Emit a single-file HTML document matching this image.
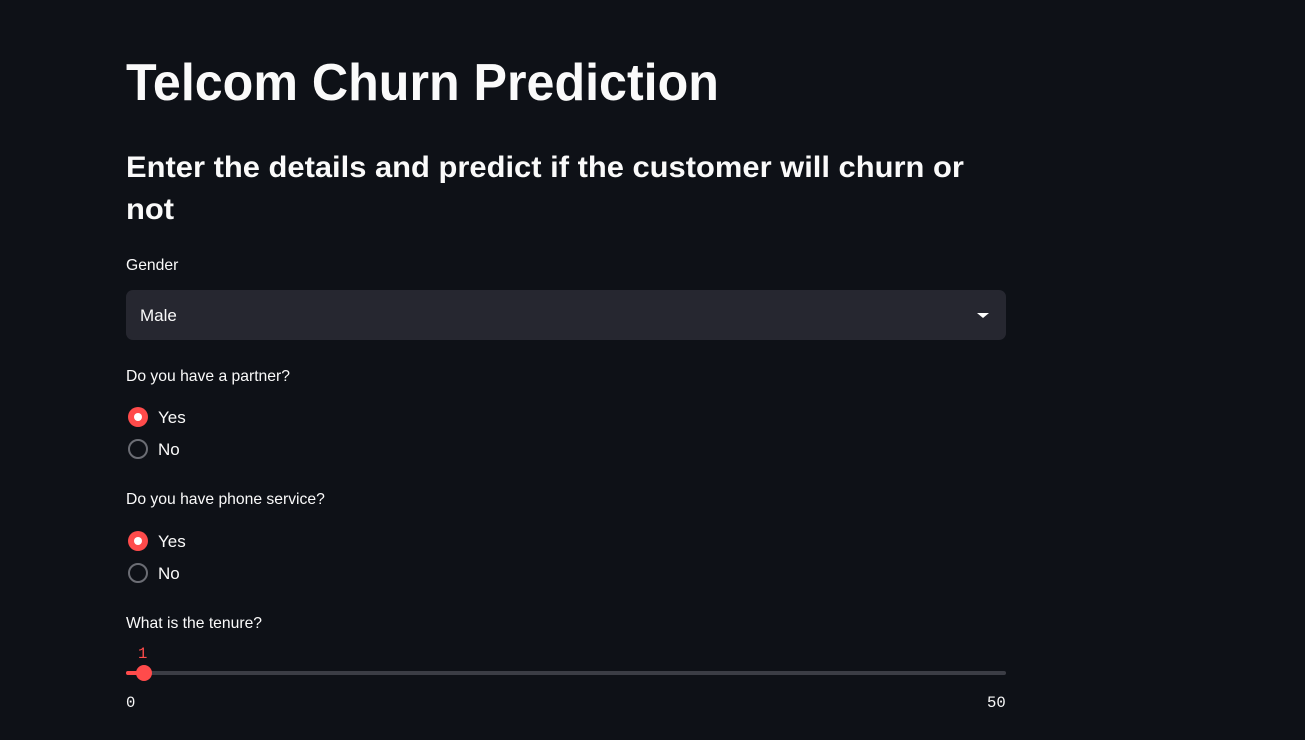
<!DOCTYPE html>
<html><head><meta charset="utf-8"><style>
html,body{margin:0;padding:0;background:#0e1117;width:1305px;height:740px;overflow:hidden;font-family:"Liberation Sans",sans-serif;color:#fafafa}
.a{position:absolute;white-space:nowrap}
h1{position:absolute;left:126px;top:52px;margin:0;font-size:52px;line-height:62px;font-weight:700;transform:scaleX(0.965);transform-origin:left top;white-space:nowrap}
.h2{left:126px;font-size:30px;font-weight:700;line-height:42px;transform:scaleX(1.03);transform-origin:left top}
.lbl{left:126px;font-size:15.7px;line-height:20px}
.sel{position:absolute;left:126px;top:290px;width:880px;height:50px;background:#262730;border-radius:7px}
.radio{position:absolute;left:128px;width:20px;height:20px;border-radius:50%;box-sizing:border-box}
.on{background:#ff4b4b}
.on::after{content:"";position:absolute;left:6px;top:6px;width:8px;height:8px;border-radius:50%;background:#fff}
.off{border:2px solid #6b6d74}
.rt{left:158px;font-size:17px;line-height:22px}
.mono{font-family:"Liberation Mono",monospace;font-size:15.6px;line-height:18px}
</style></head><body>
<h1>Telcom Churn Prediction</h1>
<div class="a h2" style="top:147px">Enter the details and predict if the customer will churn or</div>
<div class="a h2" style="top:189px">not</div>
<div class="a lbl" style="top:256px">Gender</div>
<div class="sel"></div>
<div class="a" style="left:140px;top:305px;font-size:17px;line-height:22px">Male</div>
<div class="a" style="left:977px;top:313px;width:0;height:0;border-left:6px solid transparent;border-right:6px solid transparent;border-top:5px solid #fff"></div>
<div class="a lbl" style="top:367px">Do you have a partner?</div>
<div class="radio on" style="top:407px"></div><div class="a rt" style="top:407px">Yes</div>
<div class="radio off" style="top:439px"></div><div class="a rt" style="top:439px">No</div>
<div class="a lbl" style="top:490px">Do you have phone service?</div>
<div class="radio on" style="top:531px"></div><div class="a rt" style="top:531px">Yes</div>
<div class="radio off" style="top:563px"></div><div class="a rt" style="top:563px">No</div>
<div class="a lbl" style="top:614px">What is the tenure?</div>
<div class="a mono" style="left:138px;top:645px;color:#ff4b4b">1</div>
<div class="a" style="left:126px;top:671px;width:880px;height:4px;background:#3b3d45;border-radius:2px"></div>
<div class="a" style="left:126px;top:671px;width:18px;height:4px;background:#ff4b4b;border-radius:2px"></div>
<div class="a" style="left:136px;top:665px;width:16px;height:16px;border-radius:50%;background:#ff4b4b"></div>
<div class="a mono" style="left:126px;top:694px">0</div>
<div class="a mono" style="left:987px;top:694px">50</div>
</body></html>
